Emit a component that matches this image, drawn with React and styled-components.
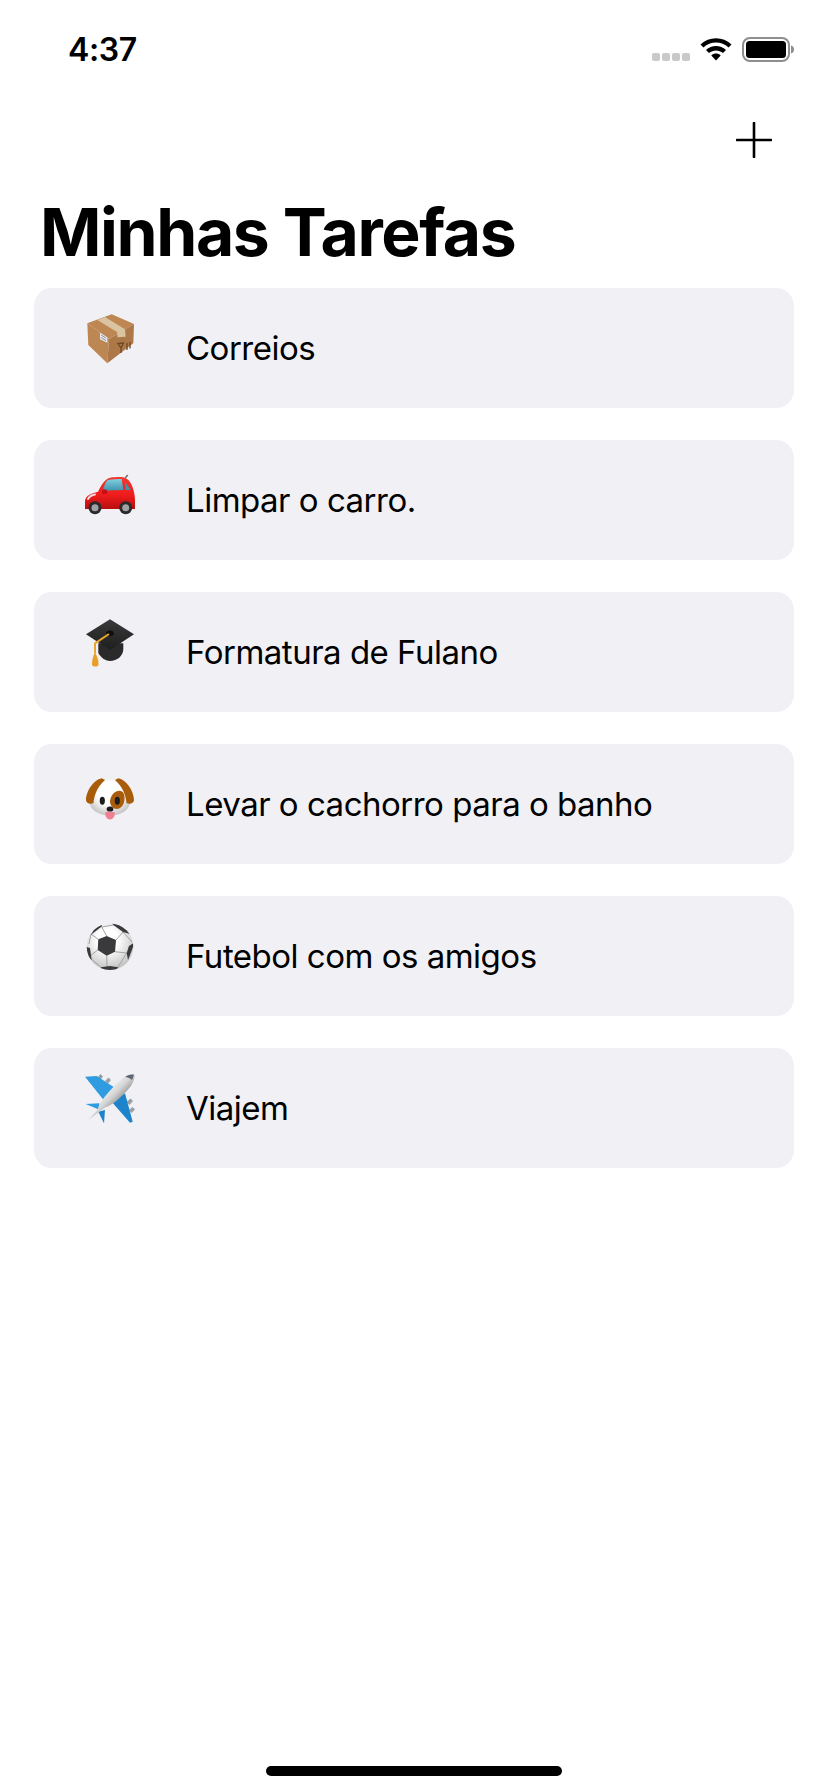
import React from 'react';
import styled, { createGlobalStyle } from 'styled-components';

const GlobalStyle = createGlobalStyle`
    html, body {
        margin: 0;
        padding: 0;
        background: #ffffff;
    }
    body {
        font-family: Inter, "Liberation Sans", sans-serif;
        color: #000000;
    }
`;

const Screen = styled.div`
    width: 828px;
    height: 1792px;
    display: flex;
    flex-direction: column;
    background: #ffffff;
    overflow: hidden;
`;

const StatusBar = styled.div`
    height: 88px;
    flex-shrink: 0;
    box-sizing: border-box;
    padding: 29px 34px 0 68px;
    display: flex;
    justify-content: space-between;
    align-items: flex-start;
`;

const Time = styled.span`
    font-size: 32px;
    line-height: 42px;
    font-weight: 600;
    letter-spacing: -0.4px;
`;

const StatusIcons = styled.div`
    display: flex;
    align-items: flex-start;
    gap: 10px;
    padding-top: 8px;
`;

const NoSignal = styled.div`
    display: flex;
    gap: 2px;
    margin-top: 16px;
`;

const SignalDot = styled.span`
    width: 8px;
    height: 8px;
    border-radius: 2px;
    background: #c9c9c9;
`;

const NavBar = styled.div`
    height: 104px;
    flex-shrink: 0;
    display: flex;
    justify-content: flex-end;
    align-items: center;
    padding-right: 56px;
`;

const AddButton = styled.button`
    border: 0;
    background: none;
    padding: 0;
    display: flex;
`;

const Title = styled.h1`
    margin: 0 0 16px;
    padding-left: 40px;
    font-size: 66px;
    line-height: 80px;
    font-weight: 700;
    letter-spacing: -1.4px;
`;

const TaskList = styled.div`
    display: flex;
    flex-direction: column;
    gap: 32px;
    padding: 0 34px;
`;

const TaskRow = styled.div`
    height: 120px;
    display: flex;
    align-items: center;
    border-radius: 18px;
    background: #f0f0f5;
`;

const TaskEmoji = styled.div`
    width: 152px;
    height: 120px;
    flex-shrink: 0;
    box-sizing: border-box;
    padding: 24px 0 0 51px;
`;

const TaskName = styled.span`
    font-size: 33px;
    line-height: 40px;
    font-weight: 400;
    letter-spacing: -0.5px;
`;

const Spacer = styled.div`
    flex: 1;
`;

const HomeArea = styled.div`
    height: 26px;
    flex-shrink: 0;
    display: flex;
    justify-content: center;
`;

const HomeBar = styled.div`
    width: 296px;
    height: 10px;
    border-radius: 5px;
    background: #000000;
`;

const WifiIcon = () => (
    <svg width="32" height="24" viewBox="0 0 32 24">
        <path d="M0.5 7.5C9 -0.8 23 -0.8 31.5 7.5L28.6 10.6C21.5 3.9 10.5 3.9 3.4 10.6Z" />
        <path d="M6 13C11.6 7.8 20.4 7.8 26 13L23 16.1C19 12.5 13 12.5 9 16.1Z" />
        <path d="M11.3 18.4C14 16 18 16 20.7 18.4L16 23.4Z" />
    </svg>
);

const BatteryIcon = () => (
    <svg width="52" height="26" viewBox="0 0 52 26">
        <rect x="1" y="1" width="46" height="23" rx="7" fill="none" stroke="#8e8e8e" strokeWidth="2" />
        <rect x="4" y="4" width="40" height="17" rx="3.5" fill="#000" />
        <path d="M49 8.5C51 9 52 10.5 52 12.5C52 14.5 51 16 49 16.5Z" fill="#8e8e8e" />
    </svg>
);

const PlusIcon = () => (
    <svg width="36" height="36" viewBox="0 0 36 36">
        <path d="M18 1V35M1 18H35" stroke="#000" strokeWidth="2.6" strokeLinecap="round" />
    </svg>
);

// the reference uses Apple colour emoji, no such font here so they are drawn
const BoxEmoji = () => (
    <svg width="52" height="52" viewBox="0 0 52 52">
        <path d="M2.3 11.3L26.7 2.3L49 12L24 27Z" fill="#bd8652" />
        <path d="M2.3 11.3L24 27L22.3 51.3L3.3 33Z" fill="#bd8753" />
        <path d="M49 12L24 27L22.3 51.3L48.3 31.3Z" fill="#ad7847" />
        <path d="M12.3 8L20 5L40 17.3L40.6 24.7L32.5 25.3L32 20Z" fill="#d9c3a0" />
        <path d="M15 20.7L22.3 25.3L22.3 30.7L15 27.3Z" fill="#e8eaee" />
        <path d="M16 23L21 26M16 25.5L21 28.5" stroke="#7d8792" strokeWidth="0.9" />
        <path d="M36 36V41M33 31.5L38.5 31L36 36ZM42 31V38M45 30V36.5" stroke="#6e4825" strokeWidth="1.3" fill="none" />
    </svg>
);

const CarEmoji = () => (
    <svg width="52" height="52" viewBox="0 0 52 52">
        <defs>
            <linearGradient id="carBody" x1="0" y1="0" x2="0" y2="1">
                <stop offset="0" stopColor="#ef3a32" />
                <stop offset="0.55" stopColor="#f01c1c" />
                <stop offset="1" stopColor="#b80e10" />
            </linearGradient>
            <linearGradient id="carGlass" x1="0" y1="0" x2="0" y2="1">
                <stop offset="0" stopColor="#7fcfdf" />
                <stop offset="1" stopColor="#3f93ad" />
            </linearGradient>
        </defs>
        <path d="M40 14.3L42.7 11" stroke="#6f6f6f" strokeWidth="1.5" />
        <path d="M0 45V38C0 33 3 30 13 27.7C16 21 20 15 25 13.7C30 13 36 13 38 13.3C42 14 45 17 46.7 21C48 24 50 30 50 36V45Z" fill="url(#carBody)" />
        <path d="M17.7 26.7C19 22 21 17 23 16C27 15 33 15 36.7 15L38.3 26Z" fill="url(#carGlass)" />
        <path d="M40 18L46 26H40.5Z" fill="#3f93ad" />
        <path d="M3 35C4 33 7 31 10 30.5" stroke="#fff" strokeWidth="2" fill="none" opacity="0.85" strokeLinecap="round" />
        <rect x="17" y="25.5" width="5" height="4.5" rx="1" fill="#c70f12" />
        <circle cx="10" cy="43.7" r="6.5" fill="#2b2b2b" />
        <circle cx="10" cy="43.7" r="3.5" fill="#a2a2a6" />
        <circle cx="40.7" cy="43.7" r="6.5" fill="#2b2b2b" />
        <circle cx="40.7" cy="43.7" r="3.5" fill="#a2a2a6" />
    </svg>
);

const CapEmoji = () => (
    <svg width="52" height="52" viewBox="0 0 52 52">
        <defs>
            <linearGradient id="capBoard" x1="0" y1="0" x2="0" y2="1">
                <stop offset="0" stopColor="#3a3a3b" />
                <stop offset="1" stopColor="#1e1e1f" />
            </linearGradient>
        </defs>
        <path d="M13.3 27.3V37C16 42 21 45 25 45C32 45 38.3 40 38.3 33V27.3Z" fill="#2a2a2b" />
        <path d="M25 3.3L49 18.3L25 34L1 18.3Z" fill="url(#capBoard)" />
        <ellipse cx="25" cy="17.3" rx="3.8" ry="2.8" fill="#0f0f10" />
        <path d="M24 18L10 27.3V37" stroke="#e9a52d" strokeWidth="2" fill="none" />
        <path d="M10 36C8 40 6.7 45 7 49C8 51 12.5 51 13.5 49C14 45 12 40 10 36Z" fill="#e89f2a" />
    </svg>
);

const DogEmoji = () => (
    <svg width="52" height="52" viewBox="0 0 52 52">
        <defs>
            <radialGradient id="dogFace" cx="0.5" cy="0.4" r="0.62">
                <stop offset="0.5" stopColor="#ffffff" />
                <stop offset="1" stopColor="#c2c2c2" />
            </radialGradient>
        </defs>
        <path d="M25 10C38 10 45 22 45 34C45 41 37 47.5 25 47.5C13 47.5 4.5 41 4.5 34C4.5 22 12 10 25 10Z" fill="url(#dogFace)" />
        <path d="M16.7 10.3C8 12 1 24 1 32C1 35 6 37 8.5 35C9 28 12 19 20 12Z" fill="#a95d0b" />
        <path d="M33.3 10.3C42 12 49 24 49 32C49 35 44 37 41.5 35C41 28 38 19 30 12Z" fill="#a95d0b" />
        <path d="M25 33C26 24 35 20 38.5 25C41.5 31 38 42 31 41C27 40 25 37 25 33Z" fill="#a95d0b" />
        <ellipse cx="17.3" cy="32.7" rx="2.6" ry="4" fill="#1c1c1c" />
        <ellipse cx="32.3" cy="32.7" rx="2.6" ry="4" fill="#1c1c1c" />
        <ellipse cx="25" cy="41" rx="3.4" ry="2.6" fill="#1c1c1c" />
        <path d="M20.5 44H29.5C30.5 48 28 51.5 25 51.5C22 51.5 19.5 48 20.5 44Z" fill="#f07f94" />
    </svg>
);

const BallEmoji = () => (
    <svg width="52" height="52" viewBox="0 0 52 52">
        <defs>
            <radialGradient id="ballFace" cx="0.45" cy="0.35" r="0.75">
                <stop offset="0.3" stopColor="#ffffff" />
                <stop offset="1" stopColor="#b4b4b4" />
            </radialGradient>
            <clipPath id="ballClip"><circle cx="25" cy="26.7" r="23.3" /></clipPath>
        </defs>
        <circle cx="25" cy="26.7" r="23.3" fill="url(#ballFace)" />
        <g stroke="#a2a2a4" strokeWidth="1" fill="none" clipPath="url(#ballClip)">
            <path d="M21.7 16L16.7 7M31 20L38 12M30 31.7L41.7 33M21.7 35.700L22 48M12.7 30L5 36M13.3 19.3L6 14" />
            <path d="M16.7 7L28.3 5M6 14L4 24M38 12L47 22M41.7 33L33 47M5 38L15.7 47" />
        </g>
        <g clipPath="url(#ballClip)" fill="#3a3a3c">
            <path d="M21.7 16L31 20L30 31.7L21.7 35.7L12.7 30L13.3 19.3Z" />
            <path d="M27 3L42 6L45 14L38 12L28.3 5Z" />
            <path d="M5.7 15L10 8L17 4L16.7 6.5Z" />
            <path d="M50 22L43 40L41.7 33L44 26Z" />
            <path d="M1 26.7L5 28L6.7 40L2 36Z" />
            <path d="M15.7 47.3L25 46L33.3 47.3L30 52H18Z" />
        </g>
    </svg>
);

const PlaneEmoji = () => (
    <svg width="52" height="52" viewBox="0 0 52 52">
        <defs>
            <linearGradient id="planeBody" x1="0.35" y1="0.35" x2="0.65" y2="0.65">
                <stop offset="0" stopColor="#f4f4f4" />
                <stop offset="0.5" stopColor="#d4d4d4" />
                <stop offset="1" stopColor="#8f8f8f" />
            </linearGradient>
        </defs>
        <path d="M12 6L15.5 2L18 4.5L15 8.5ZM20 9L23.5 5.5L26 8L23 11.5Z" fill="#9a9fa4" />
        <path d="M41.5 30L45.5 26.5L48 29L44.5 33ZM44 38L47.5 35L50 37.5L46.5 41Z" fill="#9a9fa4" />
        <path d="M0 4.7L11.7 4L33.3 18L20 29.7Z" fill="#2f9be0" />
        <path d="M40 21.3L47.7 49.7L45 50.7L26.7 29.7Z" fill="#1d84cb" />
        <path d="M0.7 32L14.3 31.3L15 38Z" fill="#2f9be0" />
        <path d="M13.3 39.7L20 38L19 51.3Z" fill="#1d84cb" />
        <path d="M3.3 48L13 37C14 30 27 15 39 5C44 1.5 49 1 49.5 3.5C50 7 47.5 11 46 14C37 25 27 33.500 20 35.5Z" fill="url(#planeBody)" />
        <path d="M40 5C44 2.5 48 2 49 3L47 8C45 6 42 5 40 5Z" fill="#5d6670" />
    </svg>
);

const tasks = [
    { name: 'Correios', Emoji: BoxEmoji },
    { name: 'Limpar o carro.', Emoji: CarEmoji },
    { name: 'Formatura de Fulano', Emoji: CapEmoji },
    { name: 'Levar o cachorro para o banho', Emoji: DogEmoji },
    { name: 'Futebol com os amigos', Emoji: BallEmoji },
    { name: 'Viajem', Emoji: PlaneEmoji },
];

const App = () => (
    <Screen>
        <GlobalStyle />
        <StatusBar>
            <Time>4:37</Time>
            <StatusIcons>
                <NoSignal>
                    <SignalDot />
                    <SignalDot />
                    <SignalDot />
                    <SignalDot />
                </NoSignal>
                <WifiIcon />
                <BatteryIcon />
            </StatusIcons>
        </StatusBar>
        <NavBar>
            <AddButton aria-label="Adicionar">
                <PlusIcon />
            </AddButton>
        </NavBar>
        <Title>Minhas Tarefas</Title>
        <TaskList>
            {tasks.map(({ name, Emoji }) => (
                <TaskRow key={name}>
                    <TaskEmoji>
                        <Emoji />
                    </TaskEmoji>
                    <TaskName>{name}</TaskName>
                </TaskRow>
            ))}
        </TaskList>
        <Spacer />
        <HomeArea>
            <HomeBar />
        </HomeArea>
    </Screen>
);

export default App;
